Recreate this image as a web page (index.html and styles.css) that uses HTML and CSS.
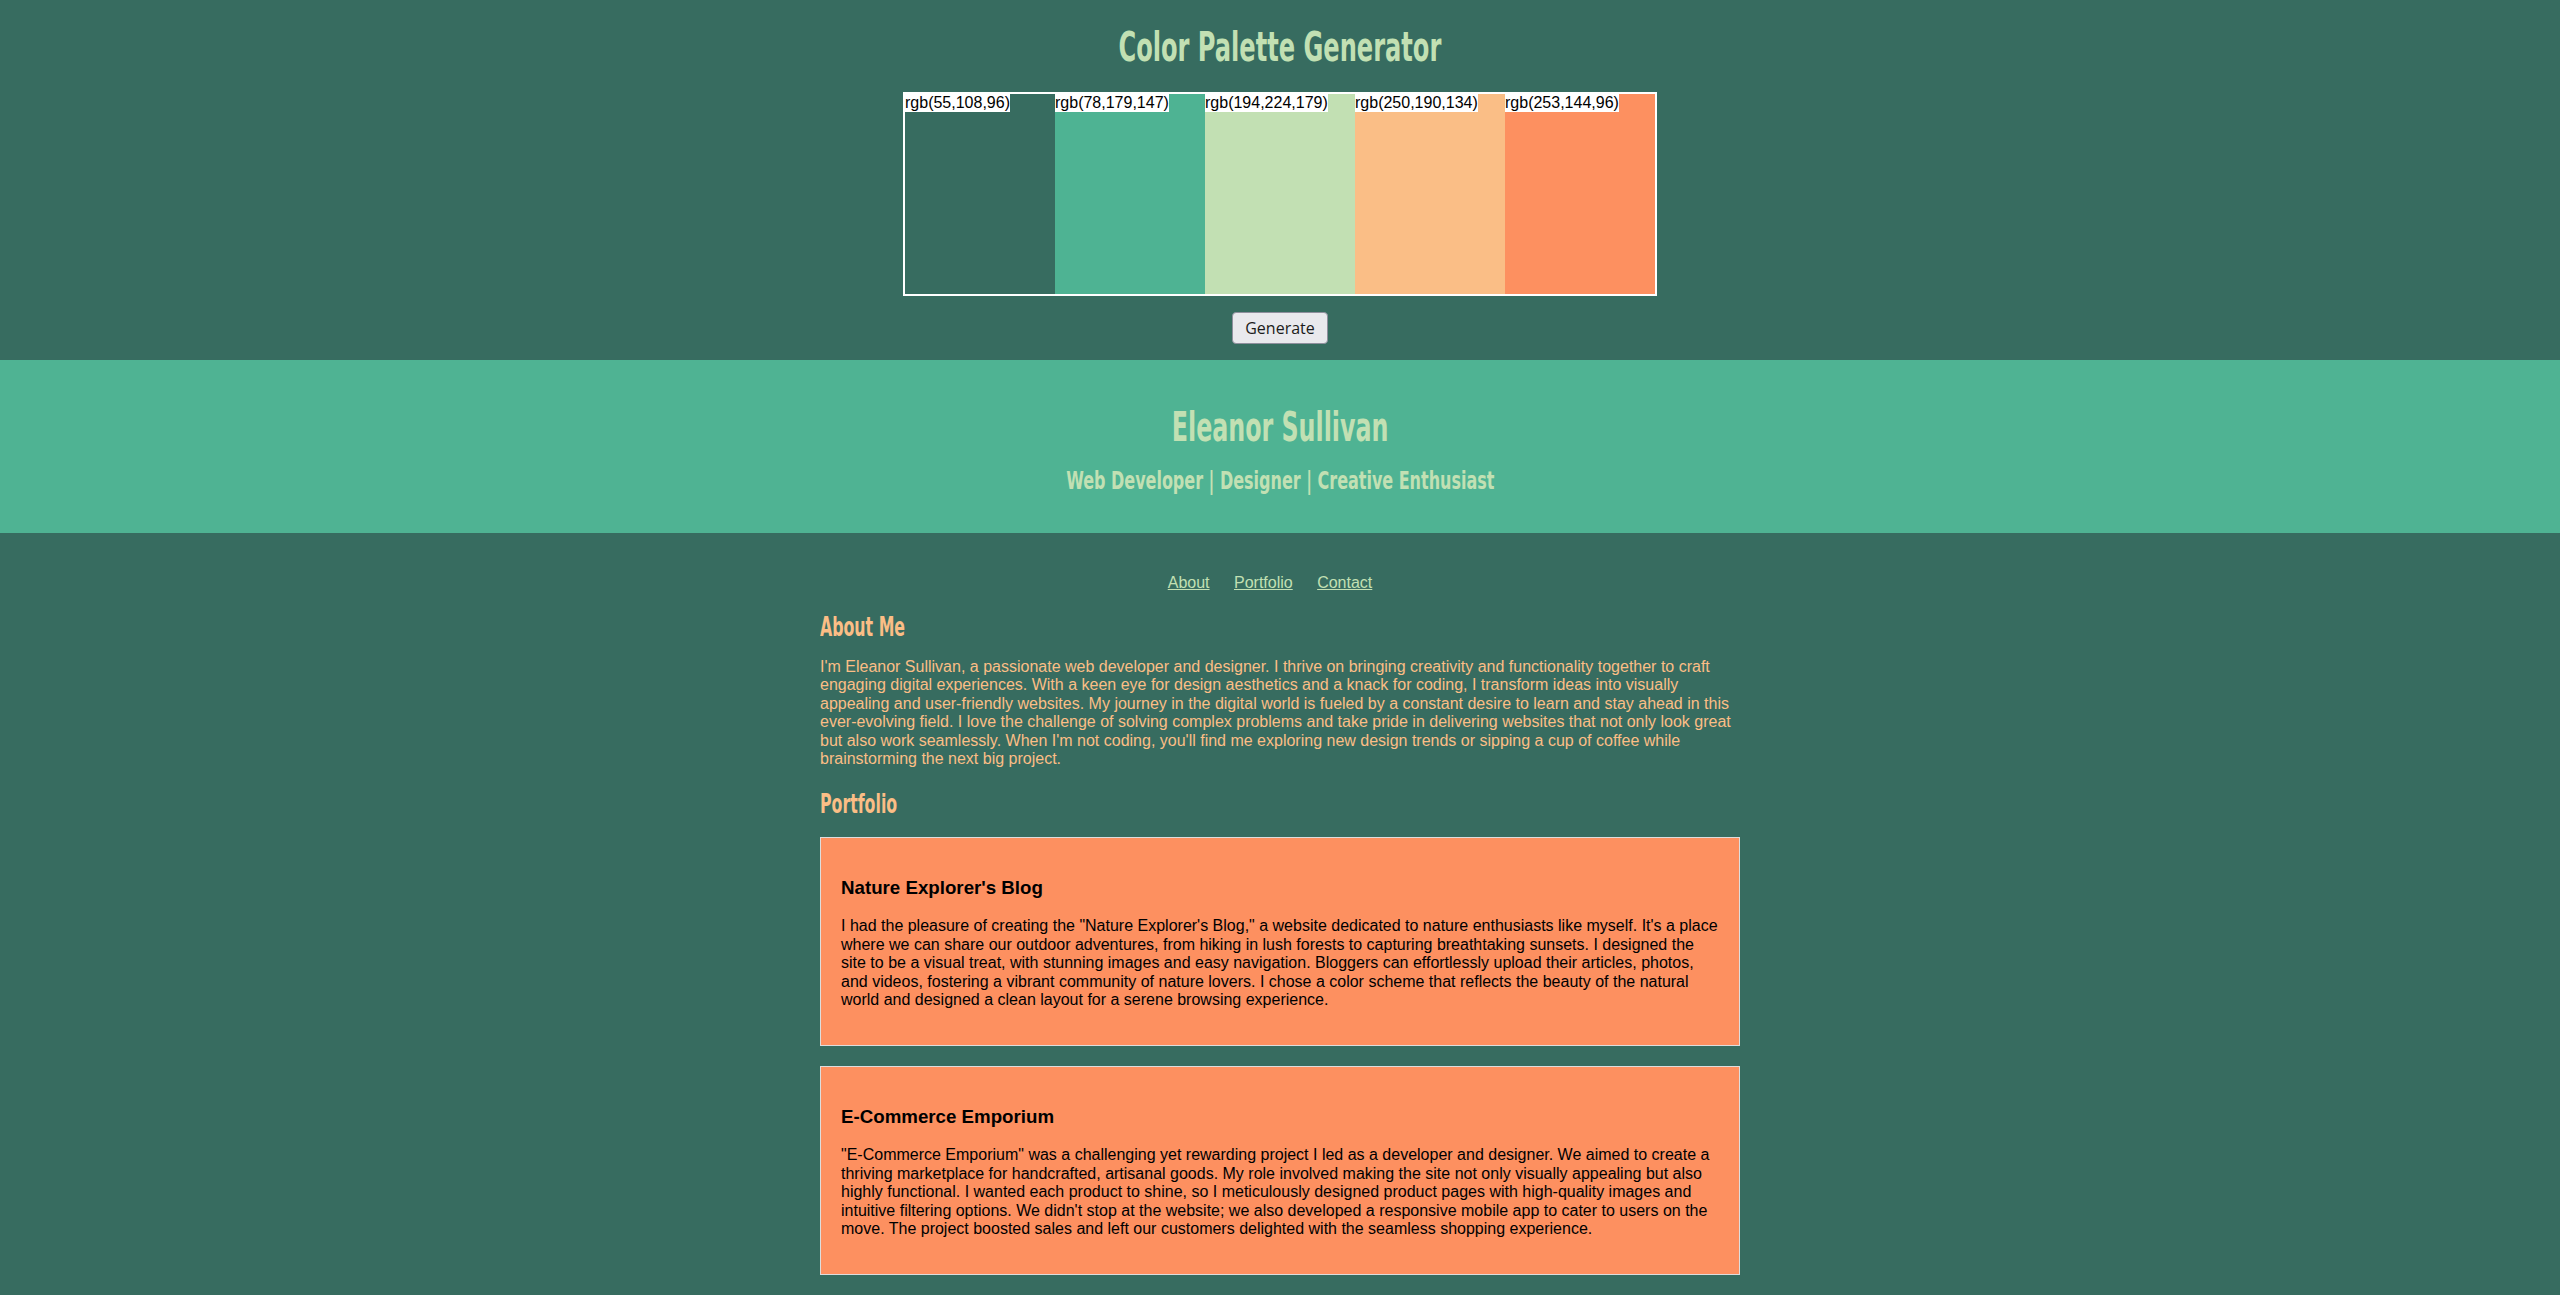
FILE: index.html
```html
<!DOCTYPE html>
<html lang="en">
<head>
<meta charset="utf-8">
<title>Eleanor Sullivan</title>
<link rel="stylesheet" href="styles.css">
</head>
<body>
<section class="generator">
  <h1 class="gen-title"><span class="cond cond-title">Color Palette Generator</span></h1>
  <div class="palette">
    <div class="swatch sw1"><span class="swatch-label">rgb(55,108,96)</span></div>
    <div class="swatch sw2"><span class="swatch-label">rgb(78,179,147)</span></div>
    <div class="swatch sw3"><span class="swatch-label">rgb(194,224,179)</span></div>
    <div class="swatch sw4"><span class="swatch-label">rgb(250,190,134)</span></div>
    <div class="swatch sw5"><span class="swatch-label">rgb(253,144,96)</span></div>
  </div>
  <button class="gen-btn" type="button">Generate</button>
</section>
<header class="band">
  <h1 class="name"><span class="cond cond-name">Eleanor Sullivan</span></h1>
  <h2 class="tagline"><span class="cond cond-tag">Web Developer | Designer | Creative Enthusiast</span></h2>
</header>
<main class="content">
  <nav class="nav">
    <a href="#about">About</a>
    <a href="#portfolio">Portfolio</a>
    <a href="#contact">Contact</a>
  </nav>
  <h2 class="section-title" id="about"><span class="cond cond-h2">About Me</span></h2>
  <p class="about-text">I'm Eleanor Sullivan, a passionate web developer and designer. I thrive on bringing creativity and functionality together to craft engaging digital experiences. With a keen eye for design aesthetics and a knack for coding, I transform ideas into visually appealing and user-friendly websites. My journey in the digital world is fueled by a constant desire to learn and stay ahead in this ever-evolving field. I love the challenge of solving complex problems and take pride in delivering websites that not only look great but also work seamlessly. When I'm not coding, you'll find me exploring new design trends or sipping a cup of coffee while brainstorming the next big project.</p>
  <h2 class="section-title portfolio-title" id="portfolio"><span class="cond cond-h2">Portfolio</span></h2>
  <article class="card">
    <h3 class="card-title">Nature Explorer's Blog</h3>
    <p class="card-text">I had the pleasure of creating the "Nature Explorer's Blog," a website dedicated to nature enthusiasts like myself. It's a place where we can share our outdoor adventures, from hiking in lush forests to capturing breathtaking sunsets. I designed the site to be a visual treat, with stunning images and easy navigation. Bloggers can effortlessly upload their articles, photos, and videos, fostering a vibrant community of nature lovers. I chose a color scheme that reflects the beauty of the natural world and designed a clean layout for a serene browsing experience.</p>
  </article>
  <article class="card">
    <h3 class="card-title">E-Commerce Emporium</h3>
    <p class="card-text">"E-Commerce Emporium" was a challenging yet rewarding project I led as a developer and designer. We aimed to create a thriving marketplace for handcrafted, artisanal goods. My role involved making the site not only visually appealing but also highly functional. I wanted each product to shine, so I meticulously designed product pages with high-quality images and intuitive filtering options. We didn't stop at the website; we also developed a responsive mobile app to cater to users on the move. The project boosted sales and left our customers delighted with the seamless shopping experience.</p>
  </article>
</main>
</body>
</html>
```
FILE: styles.css
```css
html, body {
  margin: 0;
  padding: 0;
}
body {
  background: #376c60;
  font-family: "Liberation Sans", Arial, sans-serif;
  font-size: 16px;
}
.cond {
  display: inline-block;
  font-family: "DejaVu Sans Condensed", "DejaVu Sans", sans-serif;
  font-weight: bold;
  white-space: nowrap;
  transform-origin: center;
}
.cond-title { transform: scaleX(0.67); }
.cond-name { transform: scaleX(0.66); }
.cond-tag { transform: scaleX(0.74); }
.cond-h2 { transform: scaleX(0.65); transform-origin: left center; }
.generator {
  display: flex;
  flex-direction: column;
  align-items: center;
  padding: 26.5px 0 16px;
}
.gen-title {
  margin: 0 0 25.5px;
  font-size: 40px;
  line-height: 40px;
  font-weight: normal;
  color: #c2e0b3;
  text-align: center;
}
.palette {
  display: flex;
  border: 2px solid #ffffff;
  width: 750px;
  height: 200px;
  margin-bottom: 16px;
}
.swatch {
  width: 150px;
  height: 200px;
}
.sw1 { background: rgb(55,108,96); }
.sw2 { background: rgb(78,179,147); }
.sw3 { background: rgb(194,224,179); }
.sw4 { background: rgb(250,190,134); }
.sw5 { background: rgb(253,144,96); }
.swatch-label {
  display: inline-block;
  background: #ffffff;
  color: #000000;
  font-family: "Liberation Sans", Arial, sans-serif;
  font-size: 16px;
  line-height: 18px;
}
.gen-btn {
  font-family: "Open Sans", "Noto Sans", sans-serif;
  font-size: 16px;
  line-height: 22px;
  color: #1b1b1b;
  background: #e9e9ed;
  border: 1px solid #8f8f9d;
  border-radius: 4px;
  padding: 4px 12px;
}
.band {
  background: #4fb393;
  padding: 46.5px 0 40.5px;
  text-align: center;
  color: #c2e0b3;
}
.name {
  margin: 0 0 22px;
  font-size: 40px;
  line-height: 40px;
  font-weight: normal;
}
.tagline {
  margin: 0;
  font-size: 24px;
  line-height: 24px;
  font-weight: normal;
}
.content {
  width: 920px;
  margin: 0 auto;
  padding: 40.5px 0 40px;
}
.nav {
  text-align: center;
  line-height: 18px;
  padding-left: 0;
}
.nav a {
  color: #c2e0b3;
  margin-right: 20px;
}
.section-title {
  margin: 20px 0 16.5px;
  font-size: 27px;
  line-height: 30px;
  font-weight: normal;
  color: #fbbe86;
}
.portfolio-title {
  margin: 20.5px 0 18.5px;
}
.about-text {
  margin: 0;
  color: #fbbe86;
  line-height: 18.4px;
}
.card {
  background: #fd9060;
  border: 1px solid #dddddd;
  padding: 20px;
  margin-bottom: 20px;
}
.card-title {
  margin: 18.72px 0;
  font-size: 18.72px;
  line-height: 21.5px;
  color: #000000;
}
.card-text {
  margin: 0 0 16px;
  line-height: 18.4px;
  color: #000000;
}
```
